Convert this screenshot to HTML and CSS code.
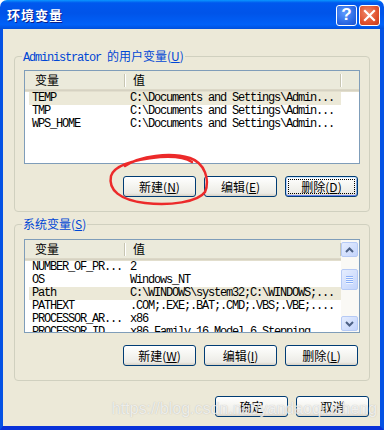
FILE: index.html
```html
<!DOCTYPE html>
<html>
<head>
  <meta charset="UTF-8">
  <title>环境变量</title>
  <link rel="stylesheet" href="styles.css">
</head>
<body>
  <div class="win">
    <div class="titlebar">
      <span class="title">环境变量</span>
      <div class="caption-btns">
        <span class="cbtn help">?</span>
        <span class="cbtn close">
          <svg width="13" height="13" viewBox="0 0 13 13"><path d="M2 2 L11 11 M11 2 L2 11" stroke="#fff" stroke-width="2.2" stroke-linecap="square"/></svg>
        </span>
      </div>
    </div>

    <div class="client">
      <div class="group user-group">
        <span class="legend"><span class="m">Administrator </span>的用户变量(<u>U</u>)</span>
        <div class="list">
          <div class="list-main">
            <div class="lv-head">
              <span class="hc c1">变量</span>
              <span class="hc c2">值</span>
              <span class="hc c3"></span>
            </div>
            <div class="row sel"><span class="c1">TEMP</span><span class="c2">C:\Documents and Settings\Admin...</span></div>
            <div class="row"><span class="c1">TMP</span><span class="c2">C:\Documents and Settings\Admin...</span></div>
            <div class="row"><span class="c1">WPS_HOME</span><span class="c2">C:\Documents and Settings\Admin...</span></div>
          </div>
        </div>
        <div class="btn-row">
          <button class="btn">新建(<u>N</u>)</button>
          <button class="btn">编辑(<u>E</u>)</button>
          <button class="btn focus">删除(<u>D</u>)</button>
        </div>
      </div>

      <div class="group sys-group">
        <span class="legend">系统变量(<u>S</u>)</span>
        <div class="list">
          <div class="list-main">
            <div class="lv-head">
              <span class="hc c1">变量</span>
              <span class="hc c2">值</span>
            </div>
            <div class="row"><span class="c1">NUMBER_OF_PR...</span><span class="c2">2</span></div>
            <div class="row"><span class="c1">OS</span><span class="c2">Windows_NT</span></div>
            <div class="row sel"><span class="c1">Path</span><span class="c2">C:\WINDOWS\system32;C:\WINDOWS;...</span></div>
            <div class="row"><span class="c1">PATHEXT</span><span class="c2">.COM;.EXE;.BAT;.CMD;.VBS;.VBE;....</span></div>
            <div class="row"><span class="c1">PROCESSOR_AR...</span><span class="c2">x86</span></div>
            <div class="row"><span class="c1">PROCESSOR_ID...</span><span class="c2">x86 Family 16 Model 6 Stepping ...</span></div>
          </div>
          <div class="scrollbar">
            <span class="sb-btn">
              <svg width="9" height="6" viewBox="0 0 9 6"><path d="M1 5 L4.5 1.5 L8 5" fill="none" stroke="#4D6185" stroke-width="2"/></svg>
            </span>
            <span class="sb-thumb">
              <i></i><i></i><i></i><i></i>
            </span>
            <span class="sb-space"></span>
            <span class="sb-btn">
              <svg width="9" height="6" viewBox="0 0 9 6"><path d="M1 1 L4.5 4.5 L8 1" fill="none" stroke="#4D6185" stroke-width="2"/></svg>
            </span>
          </div>
        </div>
        <div class="btn-row">
          <button class="btn">新建(<u>W</u>)</button>
          <button class="btn">编辑(<u>I</u>)</button>
          <button class="btn">删除(<u>L</u>)</button>
        </div>
      </div>

      <div class="dlg-row">
        <button class="btn">确定</button>
        <button class="btn">取消</button>
      </div>
    </div>

    <!-- red marker drawn over the screenshot -->
    <svg class="marker" width="384" height="430" viewBox="0 0 384 430">
      <path d="M125 166 C140 156 170 152 190 158 C205 163 210 180 205 192 C198 202 170 206 145 203 C120 200 108 190 111 176 C114 166 130 160 160 157 C175 156 186 158 192 162"
            fill="none" stroke="#EC2A2A" stroke-width="2.5" stroke-linecap="round"/>
    </svg>
    <div class="watermark">https://blog.csdn.net/yandaoqiusheng</div>
  </div>
</body>
</html>
```

FILE: styles.css
```css
html, body {
  margin: 0;
  background: #fff;
}

.win {
  position: relative;
  width: 384px;
  height: 430px;
  overflow: hidden;
  font-family: "Noto Sans CJK SC", sans-serif;
  font-size: 12px;
  color: #000;
}

.titlebar {
  height: 29px;
  display: flex;
  align-items: center;
  justify-content: space-between;
  padding: 0 4px 0 7px;
  box-sizing: border-box;
  border-radius: 7px 7px 0 0;
  background: linear-gradient(#0A97FF 0, #0058EE 10%, #0054E9 45%, #0061F8 85%, #0050DC 100%);
}

.title {
  color: #fff;
  font-weight: bold;
  font-size: 13px;
  text-shadow: 1px 1px 0 #0A1E8C;
  letter-spacing: 1px;
}

.caption-btns {
  display: flex;
  gap: 2px;
  margin-top: 1px;
}

.cbtn {
  width: 21px;
  height: 21px;
  box-sizing: border-box;
  border: 1px solid #fff;
  border-radius: 3px;
  display: flex;
  align-items: center;
  justify-content: center;
}

.help {
  background: radial-gradient(circle at 40% 35%, #5D9BFF, #2663E0 70%, #1F55CC);
  color: #fff;
  font-family: "Liberation Sans", sans-serif;
  font-weight: bold;
  font-size: 17px;
}

.close {
  background: radial-gradient(circle at 40% 35%, #F08A6C, #E0512D 60%, #C43A1A);
}

.client {
  height: 401px;
  box-sizing: border-box;
  border-left: 3px solid #0552E4;
  border-right: 4px solid #0552E4;
  border-bottom: 4px solid #0831D9;
  background: #ECE9D8;
  overflow: hidden;
}

.group {
  position: relative;
  box-sizing: border-box;
  border: 1px solid #D0D0BF;
  border-radius: 4px;
  margin: 0 10px 0 11px;
  padding: 13px 9px 0 9px;
}

.user-group {
  margin-top: 27px;
  height: 156px;
}

.sys-group {
  margin-top: 12px;
  height: 157px;
  padding-top: 14px;
}

.legend {
  position: absolute;
  top: -8px;
  left: 7px;
  padding: 0 1px;
  line-height: 14px;
  background: #ECE9D8;
  color: #0046D5;
}

.m {
  font-family: "Liberation Mono", monospace;
  letter-spacing: -1.2px;
}

.list {
  height: 94px;
  box-sizing: border-box;
  border: 1px solid #7F9DB9;
  background: #fff;
  display: flex;
  overflow: hidden;
}

.list-main {
  flex: 1;
  overflow: hidden;
}

.lv-head {
  display: flex;
  height: 21px;
  box-sizing: border-box;
  padding-bottom: 3px;
  background: #EBEADB;
  box-shadow: inset 0 -1px 0 #E2DECD, inset 0 -2px 0 #D6D2C2, inset 0 -3px 0 #DCD8C7;
  line-height: 18px;
}

.hc {
  position: relative;
}

.hc.c1 {
  width: 100px;
  padding-left: 10px;
  box-sizing: border-box;
}

.hc.c2 {
  width: 216px;
  padding-left: 8px;
  box-sizing: border-box;
}

.hc.c1::after,
.hc.c2::after {
  content: "";
  position: absolute;
  right: 0;
  top: 3px;
  width: 1px;
  height: 13px;
  background: #C7C5B2;
  box-shadow: 1px 0 0 #fff;
}

.row {
  display: flex;
  width: 312px;
  margin-left: 4px;
  height: 13px;
  line-height: 13px;
  font-family: "Liberation Mono", monospace;
  letter-spacing: -1.2px;
  white-space: nowrap;
}

.row.sel {
  background: #ECE9D8;
}

.row .c1 {
  width: 98px;
  padding-left: 3px;
  box-sizing: border-box;
}

.row .c2 {
  padding-left: 3px;
}

.scrollbar {
  width: 18px;
  display: flex;
  flex-direction: column;
  background: #FAF9F5;
}

.sb-btn,
.sb-thumb {
  width: 17px;
  box-sizing: border-box;
  border: 1px solid #B6CAF5;
  border-radius: 2px;
  background: linear-gradient(135deg, #E5EDFE, #C3D4FC);
  display: flex;
  align-items: center;
  justify-content: center;
}

.sb-btn {
  height: 15px;
  margin: 2px 0 0 0;
}

.sb-btn:last-child {
  margin: 0 0 1px 0;
}

.sb-thumb {
  height: 21px;
  margin-top: 12px;
  flex-direction: column;
  gap: 1px;
}

.sb-thumb i {
  display: block;
  width: 7px;
  height: 1px;
  background: #8CB0F8;
  box-shadow: 0 1px 0 #EEF4FE;
}

.sb-space {
  flex: 1;
}

.btn-row,
.dlg-row {
  display: flex;
  justify-content: flex-end;
  gap: 8px;
}

.btn-row {
  margin-top: 12px;
  padding-right: 2px;
}

.dlg-row {
  margin-top: 15px;
  padding-right: 11px;
}

.btn {
  position: relative;
  width: 73px;
  height: 21px;
  padding: 0;
  box-sizing: border-box;
  border: 1px solid #003C74;
  border-radius: 3px;
  background: linear-gradient(#FFFFFF, #F5F5F1 45%, #ECEBE6 85%, #D8D2C6);
  font-family: "Noto Sans CJK SC", sans-serif;
  font-size: 12px;
  line-height: 19px;
  color: #000;
}

.btn u {
  text-underline-offset: 1px;
}

.btn.focus {
  box-shadow: inset 0 1px 0 #CEE7FF, inset 0 -1px 0 #6982EE, inset 1px 0 0 #B8D2FF, inset -1px 0 0 #89ADE4;
}

.btn.focus::after {
  content: "";
  position: absolute;
  inset: 2px;
  border: 1px dotted #000;
}

.marker {
  position: absolute;
  left: 0;
  top: 0;
  pointer-events: none;
}

.watermark {
  position: absolute;
  left: 112px;
  top: 400px;
  font-family: "Liberation Sans", sans-serif;
  font-size: 16px;
  color: rgba(255, 255, 255, 0.75);
  text-shadow: 0 0 1px rgba(110, 110, 110, 0.45);
  white-space: nowrap;
}
```
